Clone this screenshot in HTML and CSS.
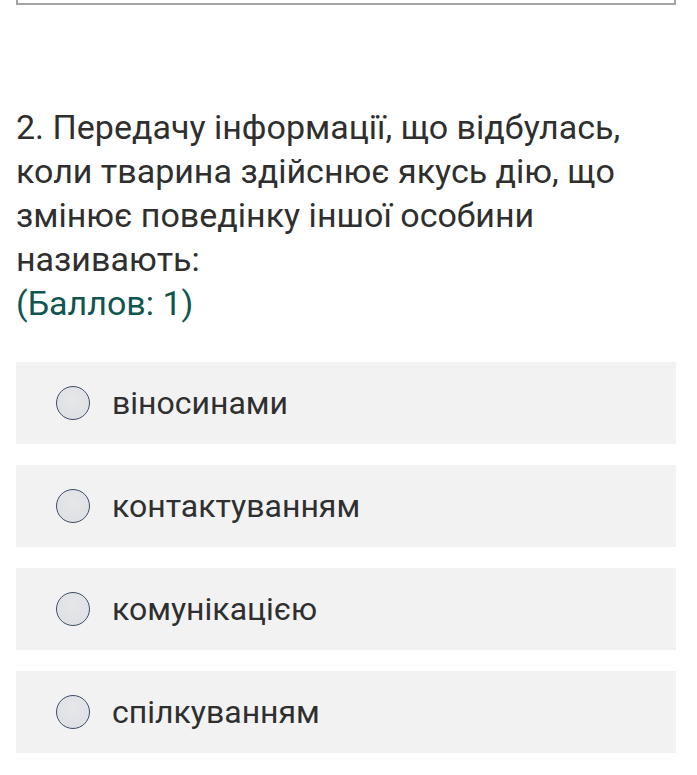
FILE: index.html
```html
<!DOCTYPE html>
<html lang="uk">
<head>
<meta charset="utf-8">
<link rel="stylesheet" href="styles.css">
</head>
<body>
<div class="page">
  <div class="prev-box"></div>
  <div class="question">
    <div class="q-text">2. Передачу інформації, що відбулась, коли тварина здійснює якусь дію, що змінює поведінку іншої особини називають:</div>
    <div class="q-score">(Баллов: 1)</div>
  </div>
  <div class="options">
    <label class="option"><span class="radio"></span><span class="opt-text">віносинами</span></label>
    <label class="option"><span class="radio"></span><span class="opt-text">контактуванням</span></label>
    <label class="option"><span class="radio"></span><span class="opt-text">комунікацією</span></label>
    <label class="option"><span class="radio"></span><span class="opt-text">спілкуванням</span></label>
  </div>
</div>
</body>
</html>
```
FILE: styles.css
```css
html, body {
  margin: 0;
  padding: 0;
  background: #ffffff;
}
.page {
  padding: 0 21px 0 16px;
  font-family: Roboto, "Noto Sans", sans-serif;
  color: #2f2f2f;
}
.prev-box {
  height: 3px;
  border: 2px solid #a3a3a3;
  border-top: none;
}
.question {
  margin-top: 100px;
  font-size: 34px;
  line-height: 44px;
}
.q-score {
  color: #115552;
}
.options {
  margin-top: 37px;
  display: flex;
  flex-direction: column;
  gap: 21px;
}
.option {
  height: 82px;
  background: #f2f2f2;
  display: flex;
  align-items: center;
  padding-left: 40px;
  gap: 22px;
}
.radio {
  width: 32px;
  height: 32px;
  border-radius: 50%;
  border: 1px solid #3e4d6b;
  background: radial-gradient(circle at 50% 40%, #e6e7e9 0%, #dcdee2 100%);
  flex: none;
}
.opt-text {
  font-size: 32px;
  color: #2f2f2f;
}
```
